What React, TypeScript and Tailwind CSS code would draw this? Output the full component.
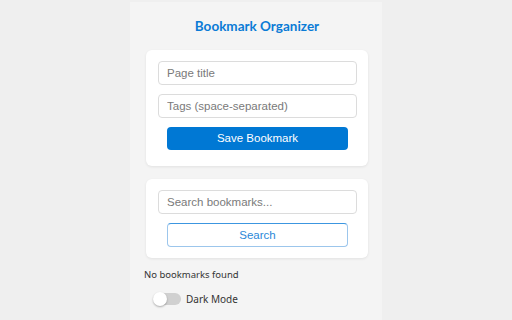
import { useState } from "react";

const ui = { fontFamily: '"Noto Sans", "Open Sans", sans-serif' };
const title = { fontFamily: 'Lato, "Noto Sans", sans-serif' };
const field = { fontFamily: '"Liberation Sans", Arial, sans-serif' };

const App = () => {
  const [dark, setDark] = useState(false);

  return (
    <div className="min-h-[320px] bg-[#efefef] flex justify-center" style={ui}>
      <div className="w-[252px] mt-[2px] bg-[#f4f4f4] pl-4 pr-[14px] pt-[13px]">
        <h1
          className="text-center text-[13.5px] leading-[22px] font-bold text-[#0a7bd6]"
          style={title}
        >
          Bookmark Organizer
        </h1>

        <div className="mt-[13px] bg-white rounded-[6px] shadow-[0_1px_3px_rgba(0,0,0,0.08)] pl-3 pr-[11px] pt-[11px] pb-[16px]">
          <input
            className="block w-full h-6 px-2 text-[11.5px] border border-[#dcdcdc] rounded-[4px] placeholder:text-[#7a7a7a] outline-none"
            style={field}
            placeholder="Page title"
          />
          <input
            className="block w-full h-6 mt-[9px] px-2 text-[11.5px] border border-[#dcdcdc] rounded-[4px] placeholder:text-[#7a7a7a] outline-none"
            style={field}
            placeholder="Tags (space-separated)"
          />
          <button
            className="block mx-auto mt-[9px] w-[181px] h-[23px] bg-[#0078d4] text-white text-[11.5px] rounded-[4px]"
            style={field}
          >
            Save Bookmark
          </button>
        </div>

        <div className="mt-[13px] bg-white rounded-[6px] shadow-[0_1px_3px_rgba(0,0,0,0.08)] pl-3 pr-[11px] pt-[11px] pb-[11px]">
          <input
            className="block w-full h-6 px-2 text-[11.5px] border border-[#dcdcdc] rounded-[4px] placeholder:text-[#7a7a7a] outline-none"
            style={field}
            placeholder="Search bookmarks..."
          />
          <button
            className="block mx-auto mt-[9px] w-[181px] h-6 pt-px bg-white text-[#2b88d8] text-[11.5px] rounded-[4px] border border-[#9cc6ec] border-t-[#3c96e0]"
            style={field}
          >
            Search
          </button>
        </div>

        <p className="-ml-[2px] mt-[10px] text-[9.5px] leading-[13px] text-[#333]">
          No bookmarks found
        </p>

        <label className="mt-[10px] ml-[8px] flex items-center gap-[5px] cursor-pointer">
          <button
            onClick={() => setDark(!dark)}
            className={`relative w-[27px] h-[12px] rounded-full ${dark ? "bg-[#0078d4]" : "bg-[#d0d0d0]"}`}
          >
            <span
              className={`absolute top-1/2 -translate-y-1/2 w-[14px] h-[14px] rounded-full bg-white shadow-[0_1px_2px_rgba(0,0,0,0.3)] ${dark ? "left-[14px]" : "-left-[1px]"}`}
            />
          </button>
          <span className="text-[10px] leading-[16px] text-[#333]">Dark Mode</span>
        </label>
      </div>
    </div>
  );
};

export default App;
